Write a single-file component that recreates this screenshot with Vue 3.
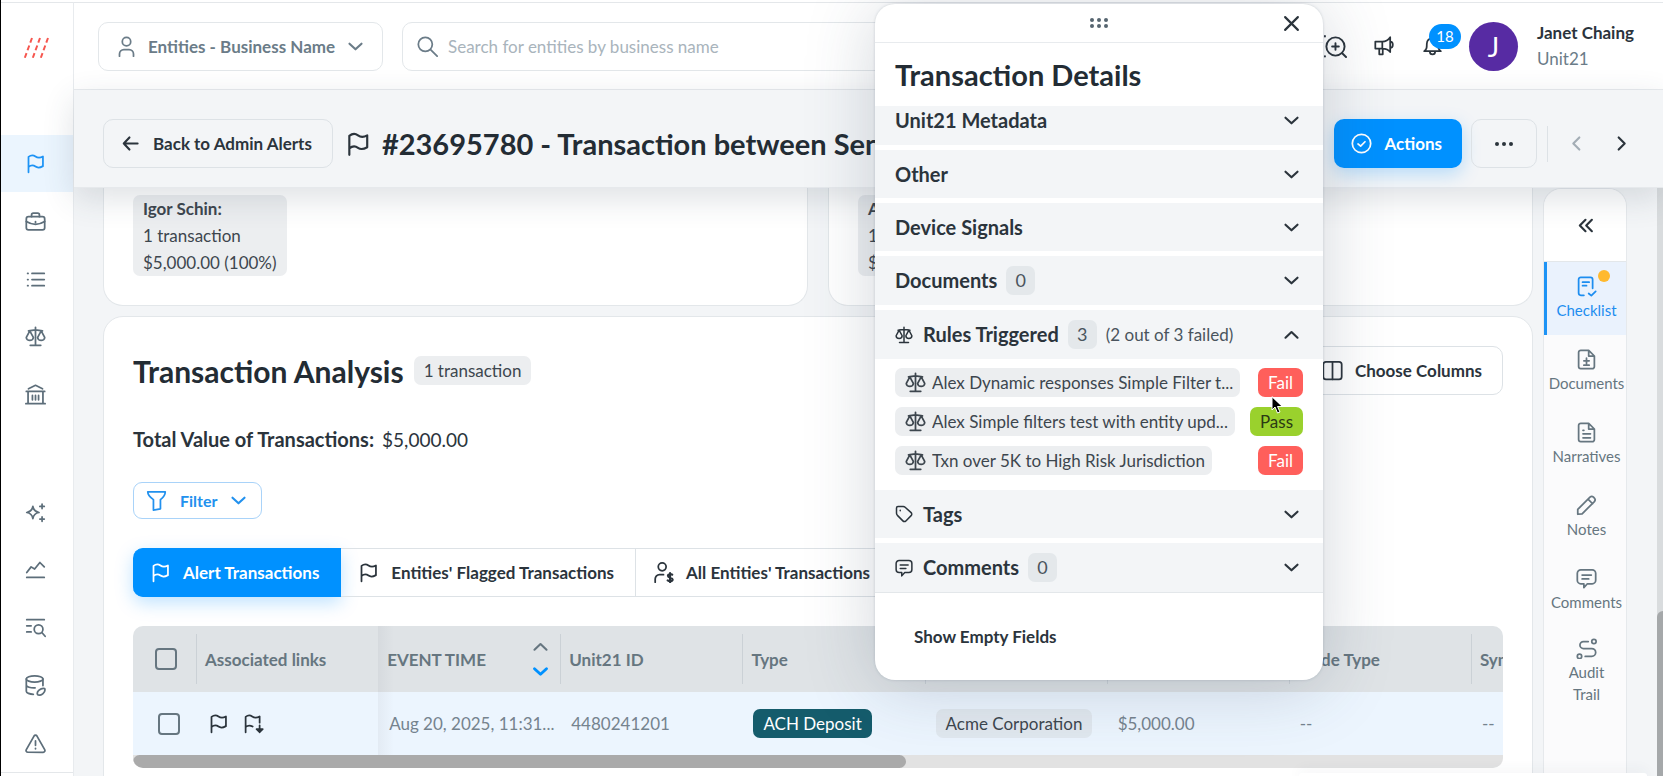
<template>
    <div class="app-shell">
        <svg class="sprite" aria-hidden="true">
            <symbol id="i-flag" viewBox="0 0 24 24"><path d="M4 22V4.500C7 2 10 2.500 12 4s5 2 8.500 0v11C17 17 14 17 12 15.500S7 13.500 4 16" /></symbol>
            <symbol id="i-flag-down" viewBox="0 0 24 24"><path d="M3 22V4.500C6 2 8.500 2.500 10.500 4s5 2 8.500 0v7M3 16c3-2.500 5.500-2 8-.5M19 14v8M15.500 18.500L19 22l3.500-3.500z" /></symbol>
            <symbol id="i-case" viewBox="0 0 24 24"><rect x="1.500" y="6.500" width="21" height="15" rx="2.500" /><path d="M7.500 6.500v-2A2 2 0 0 1 9.500 2.500h5a2 2 0 0 1 2 2v2M1.500 12c6.500 4 14.500 4 21 0M12 12v1" /></symbol>
            <symbol id="i-list" viewBox="0 0 24 24"><path d="M8 5h14M8 12h14M8 19h14M3 5h.5M3 12h.5M3 19h.5" /></symbol>
            <symbol id="i-scale" viewBox="0 0 24 24"><path d="M12 1.500V22M6 22h12M4 5.500c3 0 5-1 8-1s5 1 8 1M5.500 5.500L1.500 13a4 3.500 0 0 0 8 0zM18.500 5.500l-4 7.500a4 3.500 0 0 0 8 0z" /></symbol>
            <symbol id="i-bank" viewBox="0 0 24 24"><path d="M4 5.500L12 1.500l8 4M1.500 8.500h21M3.500 8.500V22M20.500 8.500V22M1 22.500h22M8.500 13v5M12 13v5M15.500 13v5" /></symbol>
            <symbol id="i-spark" viewBox="0 0 24 24"><path d="M9 5c.7 4.500 2.500 6.300 7 7-4.500.7-6.300 2.500-7 7-.7-4.500-2.500-6.300-7-7 4.500-.7 6.300-2.500 7-7zM19.500 2.500v5M17 5h5M19.500 17v5M17 19.500h5" /></symbol>
            <symbol id="i-chart" viewBox="0 0 24 24"><path d="M2 15.500L7 9l4 2.500L17 4l5 5M2 21h20" /></symbol>
            <symbol id="i-list-search" viewBox="0 0 24 24"><path d="M2 3h20M2 10h5M2 17h5M19.500 18L23 22" /><circle cx="15.500" cy="14" r="5" /></symbol>
            <symbol id="i-database" viewBox="0 0 24 24"><ellipse cx="11" cy="4.500" rx="9.500" ry="3.500" /><path d="M1.500 4.500v14c0 2 4 3.500 8 3.500M20.500 4.500V12M1.500 11.500c0 2 5 3.500 10 3.200M14.500 22.500c-2-3.500 3.500-8 8-7 1.500 4-4 9-8 7z" /></symbol>
            <symbol id="i-alert" viewBox="0 0 24 24"><path d="M10.300 3.500L1.500 19a2 2 0 0 0 1.700 3h17.600a2 2 0 0 0 1.700-3L13.700 3.500a2 2 0 0 0-3.400 0zM12 9v5M12 17.500v.5" /></symbol>
            <symbol id="i-user" viewBox="0 0 24 24"><circle cx="12" cy="6.500" r="4.800" /><path d="M4 23v-2.500a5 5 0 0 1 5-5h6a5 5 0 0 1 5 5V23" /></symbol>
            <symbol id="i-user-dollar" viewBox="0 0 24 24"><circle cx="10.500" cy="5.500" r="4.500" /><path d="M2.500 23v-3.500a5 5 0 0 1 5-5H12" /><path stroke-width="2.400" d="M22 14.500c-1.500-1-5-1-5 1.300 0 2.700 5.500 1.500 5.500 4.200 0 2.300-4 2.300-5.700 1M19.500 12.500v11" /></symbol>
            <symbol id="i-down" viewBox="0 0 24 24"><path d="M3.500 8l8.500 8 8.500-8" /></symbol>
            <symbol id="i-up" viewBox="0 0 24 24"><path d="M3.500 16.500L12 8.500l8.500 8" /></symbol>
            <symbol id="i-left" viewBox="0 0 24 24"><path d="M16 3.500L7.500 12l8.500 8.500" /></symbol>
            <symbol id="i-right" viewBox="0 0 24 24"><path d="M8 3.500l8.500 8.500L8 20.500" /></symbol>
            <symbol id="i-back" viewBox="0 0 24 24"><path d="M22 12H2.500M10.500 3.500L2.500 12l8 8.500" /></symbol>
            <symbol id="i-double-left" viewBox="0 0 24 24"><path d="M12 4l-8 8 8 8M21 4l-8 8 8 8" /></symbol>
            <symbol id="i-search" viewBox="0 0 24 24"><circle cx="9.500" cy="9.500" r="8" /><path d="M15.500 15.500L23 23" /></symbol>
            <symbol id="i-search-plus" viewBox="0 0 24 24"><circle cx="12.500" cy="12" r="9.500" /><path d="M19.500 19l4 4M12.500 8.500v7M9 12h7M1.500 1v.5M1.500 22v.5" /></symbol>
            <symbol id="i-horn" viewBox="0 0 24 24"><path d="M1.500 7.500h8v8h-8zM9.500 7.500c4 0 7-2 9-5v17c-2-3-5-4-9-4M6 15.500V22h4v-6.500M18.500 7.500c4 0 4 7 0 7" /></symbol>
            <symbol id="i-bell" viewBox="0 0 24 24"><path d="M2.500 18.500h19c-3-2-3-4-3-8.500a6.500 6.500 0 0 0-13 0c0 4.500 0 6.500-3 8.500zM9 19c0 4 6 4 6 0M12 3.500V2" /></symbol>
            <symbol id="i-check" viewBox="0 0 24 24"><circle cx="12" cy="12" r="10.500" /><path d="M8 12.500l3 2.500 5-5" /></symbol>
            <symbol id="i-filter" viewBox="0 0 24 24"><path d="M2 2h20c0 4-1.500 6-5.500 9v10.500L8.500 23V11C4 8 2 6 2 2z" /></symbol>
            <symbol id="i-columns" viewBox="0 0 24 24"><rect x="1.500" y="2" width="21" height="20" rx="3" /><path d="M12 2v20" /></symbol>
            <symbol id="i-tag" viewBox="0 0 24 24"><path d="M2 4v7c0 1 .5 2 1.200 2.800l7.300 7.400a2.800 2.800 0 0 0 4 0l7-7a2.800 2.800 0 0 0 0-4L13.500 3A4 4 0 0 0 11 2H4a2 2 0 0 0-2 2zM7 7v.5" /></symbol>
            <symbol id="i-comment" viewBox="0 0 24 24"><path d="M5.500 2h13A4 4 0 0 1 22.500 6v8a4 4 0 0 1-4 4H13l-4 4.500V18H5.500a4 4 0 0 1-4-4V6a4 4 0 0 1 4-4zM7 8h10.500M7 12.500h7.500" /></symbol>
            <symbol id="i-close" viewBox="0 0 24 24"><path d="M3 3l18 18M21 3L3 21" /></symbol>
            <symbol id="i-checklist" viewBox="0 0 24 24"><path d="M9 22H5.500A2.500 2.500 0 0 1 3 19.500V4A2.500 2.500 0 0 1 5.500 1.500h11A2.500 2.500 0 0 1 19 4v10M7.500 7H15M7.500 11H12M14.500 20l3 2.500 5-5" /></symbol>
            <symbol id="i-file-plus" viewBox="0 0 24 24"><path d="M14.500 1.500H5.500A2.500 2.500 0 0 0 3 4v16a2.500 2.500 0 0 0 2.500 2.500h13A2.500 2.500 0 0 0 21 20V8zM14.500 1.500V8H21M12 10.500v6M9 13.500h6M9 18.500h6" /></symbol>
            <symbol id="i-file-text" viewBox="0 0 24 24"><path d="M14.500 1.500H5.500A2.500 2.500 0 0 0 3 4v16a2.500 2.500 0 0 0 2.500 2.500h13A2.500 2.500 0 0 0 21 20V8zM14.500 1.500V8H21M8 9.500h1M8 13.500h8.500M8 18h8.500" /></symbol>
            <symbol id="i-pencil" viewBox="0 0 24 24"><path d="M2 22v-5.500L16 2.500a3 3 0 0 1 4 0l1 1a3 3 0 0 1 0 4L7 21.500zM14 5l5 5" /></symbol>
            <symbol id="i-route" viewBox="0 0 24 24"><circle cx="20.500" cy="4" r="2.500" /><circle cx="4" cy="21" r="2.500" /><path d="M14 4H8.500a4 4 0 0 0 0 8H18a4.500 4.500 0 0 1 0 9h-7.500" /></symbol>
        </svg>

        <nav class="side-nav" aria-label="Main">
            <a class="logo" href="#" aria-label="Home">
                <svg viewBox="0 0 26 24"><path d="M9 1L1 23M17 1L9 23M25 1l-8 22" /></svg>
            </a>
            <a v-for="item in navTop" :key="item" href="#" class="nav-item" :class="{ active: item === 'flag' }" :aria-label="item">
                <svg><use :href="'#i-' + item" /></svg>
            </a>
            <span class="nav-gap"></span>
            <a v-for="item in navBottom" :key="item" href="#" class="nav-item" :aria-label="item">
                <svg><use :href="'#i-' + item" /></svg>
            </a>
            <span class="nav-foot"></span>
        </nav>

        <div class="page">
            <header class="top-bar">
                <label class="entity-select">
                    <svg><use href="#i-user" /></svg>
                    <select aria-label="Search type">
                        <option>Entities - Business Name</option>
                    </select>
                    <svg class="small"><use href="#i-down" /></svg>
                </label>
                <label class="search-box">
                    <svg><use href="#i-search" /></svg>
                    <input type="text" aria-label="Search" placeholder="Search for entities by business name">
                </label>
                <div class="top-tools">
                    <button type="button" class="tool" aria-label="Advanced search"><svg class="wide"><use href="#i-search-plus" /></svg></button>
                    <button type="button" class="tool" aria-label="Announcements"><svg><use href="#i-horn" /></svg></button>
                    <button type="button" class="tool" aria-label="Notifications">
                        <svg><use href="#i-bell" /></svg>
                        <span class="counter">18</span>
                    </button>
                </div>
                <span class="avatar">J</span>
                <div class="account">
                    <strong>Janet Chaing</strong>
                    <span>Unit21</span>
                </div>
            </header>

            <div class="alert-bar">
                <button type="button" class="btn back"><svg class="small"><use href="#i-back" /></svg>Back to Admin Alerts</button>
                <svg class="title-flag"><use href="#i-flag" /></svg>
                <h1>#23695780 - Transaction between Sender and Receiver</h1>
                <button type="button" class="btn primary"><svg><use href="#i-check" /></svg>Actions</button>
                <button type="button" class="btn more" aria-label="More"><i></i><i></i><i></i></button>
                <span class="divider"></span>
                <button type="button" class="pager muted" aria-label="Previous"><svg><use href="#i-left" /></svg></button>
                <button type="button" class="pager" aria-label="Next"><svg><use href="#i-right" /></svg></button>
            </div>

            <div class="body">
                <main class="content">
                    <div class="party-cards">
                        <section v-for="party in parties" :key="party" class="card party">
                            <div class="party-box">
                                <strong>{{ party }}:</strong>
                                <span>1 transaction</span>
                                <span>$5,000.00 (100%)</span>
                            </div>
                        </section>
                    </div>

                    <section class="card analysis">
                        <div class="analysis-head">
                            <h2>Transaction Analysis</h2>
                            <span class="chip">1 transaction</span>
                            <button type="button" class="btn columns"><svg><use href="#i-columns" /></svg>Choose Columns</button>
                        </div>
                        <p class="total"><strong>Total Value of Transactions:</strong><span>$5,000.00</span></p>
                        <button type="button" class="filter"><svg><use href="#i-filter" /></svg>Filter<svg class="small"><use href="#i-down" /></svg></button>
                        <div class="tabs">
                            <button v-for="tab in tabs" :key="tab.label" type="button" :class="{ active: activeTab === tab.label }" @click="activeTab = tab.label">
                                <svg><use :href="'#i-' + tab.icon" /></svg>{{ tab.label }}
                            </button>
                        </div>
                        <div class="table-wrap">
                            <table>
                                <thead>
                                    <tr>
                                        <th class="col-check"><input type="checkbox" aria-label="Select all"></th>
                                        <th>Associated links</th>
                                        <th class="pinned-edge">
                                            <span class="sortable">EVENT TIME
                                                <span class="sort"><svg><use href="#i-up" /></svg><svg class="on"><use href="#i-down" /></svg></span>
                                            </span>
                                        </th>
                                        <th v-for="name in columns" :key="name">{{ name }}</th>
                                    </tr>
                                </thead>
                                <tbody>
                                    <tr>
                                        <td class="col-check"><input type="checkbox" aria-label="Select transaction"></td>
                                        <td><span class="links"><svg><use href="#i-flag" /></svg><svg><use href="#i-flag-down" /></svg></span></td>
                                        <td class="pinned-edge">Aug 20, 2025, 11:31...</td>
                                        <td>4480241201</td>
                                        <td><span class="chip teal">ACH Deposit</span></td>
                                        <td><span class="chip entity">Acme Corporation</span></td>
                                        <td>$5,000.00</td>
                                        <td>--</td>
                                        <td>--</td>
                                    </tr>
                                </tbody>
                            </table>
                            <div class="h-scroll"><span></span></div>
                        </div>
                    </section>
                </main>

                <aside class="rail">
                    <button type="button" class="rail-toggle" aria-label="Expand"><svg><use href="#i-double-left" /></svg></button>
                    <a v-for="item in railItems" :key="item.label" href="#" class="rail-item" :class="{ active: item.dot }">
                        <svg><use :href="'#i-' + item.icon" /></svg>
                        <span>{{ item.label }}</span>
                        <i v-if="item.dot" class="dot"></i>
                    </a>
                </aside>
                <div class="v-scroll"><span></span></div>
            </div>
        </div>

        <section class="details" aria-label="Transaction Details">
            <div class="grip">
                <svg class="dots" viewBox="0 0 20 12"><circle v-for="n in 6" :key="n" :cx="3 + (n - 1) % 3 * 7" :cy="n > 3 ? 9 : 3" r="2" /></svg>
                <button type="button" class="close" aria-label="Close"><svg><use href="#i-close" /></svg></button>
            </div>
            <h2>Transaction Details</h2>
            <div class="sections">
                <template v-for="group in groups" :key="group.label">
                    <button type="button" class="group" :class="{ counted: group.count !== undefined, clipped: group.clipped }" @click="toggle(group.label)">
                        <svg v-if="group.icon" class="group-icon"><use :href="'#i-' + group.icon" /></svg>
                        <strong>{{ group.label }}</strong>
                        <span v-if="group.count !== undefined" class="count">{{ group.count }}</span>
                        <span v-if="group.note" class="note">{{ group.note }}</span>
                        <svg class="arrow"><use :href="opened === group.label ? '#i-up' : '#i-down'" /></svg>
                    </button>
                    <ul v-if="group.rules && opened === group.label" class="rules">
                        <li v-for="rule in group.rules" :key="rule.name">
                            <a href="#" class="chip rule"><svg><use href="#i-scale" /></svg><span>{{ rule.name }}</span></a>
                            <span class="chip" :class="rule.result.toLowerCase()">{{ rule.result }}</span>
                        </li>
                    </ul>
                </template>
            </div>
            <div class="details-foot">
                <button type="button">Show Empty Fields</button>
            </div>
            <svg class="pointer" viewBox="0 0 12 18"><path d="M1 1v13l3-3 2.500 6 2.500-1-2.500-5.500H11z" /></svg>
        </section>
        <div class="bottom-sheet"></div>
    </div>
</template>

<script setup>
    import { ref } from "vue";

    const navTop = ["flag", "case", "list", "scale", "bank"];
    const navBottom = ["spark", "chart", "list-search", "database", "alert"];
    const parties = ["Igor Schin", "Acme Corporation"];
    const columns = ["Unit21 ID", "Type", "Entity", "Amount", "Trade Type", "Symbol"];
    const tabs = [
        { label: "Alert Transactions", icon: "flag" },
        { label: "Entities' Flagged Transactions", icon: "flag" },
        { label: "All Entities' Transactions", icon: "user-dollar" }
    ];
    const railItems = [
        { label: "Checklist", icon: "checklist", dot: true },
        { label: "Documents", icon: "file-plus" },
        { label: "Narratives", icon: "file-text" },
        { label: "Notes", icon: "pencil" },
        { label: "Comments", icon: "comment" },
        { label: "Audit Trail", icon: "route" }
    ];
    const groups = [
        { label: "Unit21 Metadata", clipped: true },
        { label: "Other" },
        { label: "Device Signals" },
        { label: "Documents", count: 0 },
        {
            label: "Rules Triggered",
            icon: "scale",
            count: 3,
            note: "(2 out of 3 failed)",
            rules: [
                { name: "Alex Dynamic responses Simple Filter t...", result: "Fail" },
                { name: "Alex Simple filters test with entity upd...", result: "Pass" },
                { name: "Txn over 5K to High Risk Jurisdiction", result: "Fail" }
            ]
        },
        { label: "Tags", icon: "tag" },
        { label: "Comments", icon: "comment", count: 0 }
    ];

    const activeTab = ref("Alert Transactions");
    const opened = ref("Rules Triggered");

    const toggle = function(label) {
        opened.value = opened.value === label ? "" : label;
    };
</script>

<style>
    body {
        background: #fff;
    }
</style>

<style scoped>
    * {
        box-sizing: border-box;
    }

    .app-shell {
        position: relative;
        display: flex;
        height: 100vh;
        padding-top: 2px;
        overflow: hidden;
        border-left: 1px solid #000;
        color: #2b343c;
        font: 19px/27px Lato, "Open Sans", sans-serif;
    }

    .sprite {
        position: absolute;
        width: 0;
        height: 0;
    }

    svg {
        flex: none;
        width: 21px;
        height: 21px;
        fill: none;
        stroke: currentColor;
        stroke-width: 2;
        stroke-linecap: round;
        stroke-linejoin: round;
    }

    svg.small {
        width: 17px;
        height: 17px;
        stroke-width: 3;
    }

    h1, h2, p, ul {
        margin: 0;
        padding: 0;
    }

    h1, h2 {
        overflow: hidden;
        font-size: 29px;
        font-weight: 700;
        line-height: 36px;
        white-space: nowrap;
        color: #232c34;
    }

    a {
        color: inherit;
        text-decoration: none;
    }

    button, input, select {
        margin: 0;
        padding: 0;
        border: 0;
        background: none;
        color: inherit;
        font: inherit;
        outline: 0;
    }

    /* 左侧导航 */
    .side-nav {
        display: flex;
        flex: none;
        flex-direction: column;
        width: 73px;
        border-top: 1px solid #e4e7ea;
        border-right: 1px solid #e8ebee;
        background: #fff;
        color: #5d6e7a;
    }

    .logo {
        display: flex;
        justify-content: center;
        height: 132px;
        padding-top: 34px;
        padding-right: 3px;
    }

    .logo svg {
        width: 26px;
        height: 24px;
        stroke: #f6564f;
        stroke-width: 2;
        stroke-dasharray: 5 3;
        stroke-linecap: butt;
    }

    .nav-item {
        display: flex;
        align-items: center;
        justify-content: center;
        height: 58px;
        padding-right: 3px;
    }

    .nav-item.active {
        background: #ebf5fe;
        color: #1d93f5;
    }

    .nav-gap {
        height: 60px;
    }

    .nav-foot {
        flex: 1;
        border-bottom: 1px solid #e4e7ea;
        margin-bottom: 3px;
    }

    .page {
        display: flex;
        flex: 1;
        flex-direction: column;
        min-width: 0;
        border-top: 1px solid #e4e7ea;
        background: #f3f5f7;
    }

    /* 顶部栏 */
    .top-bar {
        display: flex;
        flex: none;
        align-items: center;
        height: 87px;
        padding: 0 29px 0 24px;
        border-bottom: 1px solid #e8ebee;
        background: #fff;
    }

    .entity-select, .search-box {
        display: flex;
        align-items: center;
        height: 49px;
        border: 1px solid #e3e7ea;
        border-radius: 10px;
        color: #6b7c88;
    }

    .entity-select {
        gap: 11px;
        padding: 0 18px 0 17px;
    }

    .entity-select select {
        appearance: none;
        font-weight: 700;
        font-size: 17px;
    }

    .search-box {
        flex: 1;
        gap: 10px;
        margin-left: 19px;
        padding-left: 14px;
    }

    .search-box input {
        flex: 1;
        font-size: 17px;
    }

    .search-box input::placeholder {
        color: #a9b4bc;
        opacity: 1;
    }

    .top-tools {
        display: flex;
        gap: 27px;
        margin-left: 24px;
    }

    .tool {
        position: relative;
        display: flex;
    }

    .tool svg.wide {
        width: 24px;
        height: 23px;
    }

    .counter {
        position: absolute;
        left: 7px;
        bottom: 9px;
        width: 32px;
        border-radius: 13px;
        background: #0091ff;
        color: #fff;
        font-size: 15px;
        line-height: 25px;
    }

    .avatar {
        width: 49px;
        margin-left: 26px;
        border-radius: 50%;
        background: #572ba3;
        color: #fff;
        font-size: 27px;
        line-height: 49px;
        text-align: center;
    }

    .account {
        display: flex;
        flex-direction: column;
        margin-left: 19px;
        font-size: 17px;
        line-height: 26px;
    }

    .account span {
        color: #6b7c88;
    }

    .alert-bar {
        position: relative;
        z-index: 1;
        display: flex;
        flex: none;
        align-items: center;
        height: 98px;
        padding: 10px 33px 0 29px;
        border-bottom: 1px solid #e6e9ec;
        background: #f3f5f7;
        box-shadow: 0 10px 32px rgba(50, 70, 90, 0.16);
    }

    .alert-bar h1 {
        flex: 1;
        margin-left: 11px;
    }

    .btn {
        display: flex;
        flex: none;
        align-items: center;
        justify-content: center;
        height: 49px;
        border: 1px solid #dde2e6;
        border-radius: 10px;
        font-size: 17px;
        font-weight: 700;
    }

    .btn.back {
        gap: 14px;
        padding: 0 20px 0 18px;
    }

    .title-flag {
        width: 26px;
        height: 26px;
        margin-left: 12px;
    }

    .btn.primary {
        gap: 12px;
        padding: 0 20px 0 17px;
        border: 0;
        background: #0091ff;
        color: #fff;
        box-shadow: 0 6px 18px rgba(0, 145, 255, 0.25);
    }

    .btn.more {
        gap: 3px;
        width: 66px;
        margin-left: 9px;
    }

    .btn.more i {
        width: 4px;
        height: 4px;
        border-radius: 50%;
        background: #2b343c;
    }

    .divider {
        width: 1px;
        height: 36px;
        margin: 0 20px 0 10px;
        background: #dde2e6;
    }

    .pager {
        display: flex;
        margin-left: 28px;
    }

    .pager.muted {
        margin-left: 0;
        color: #a3adb5;
    }

    .pager svg {
        width: 17px;
        height: 17px;
        stroke-width: 3;
    }

    /* 主体内容 */
    .body {
        display: flex;
        flex: 1;
        min-height: 0;
        overflow: hidden;
    }

    .content {
        flex: 1;
        min-width: 0;
        padding-left: 29px;
    }

    .card {
        border: 1px solid #e3e7ea;
        background: #fff;
    }

    .party-cards {
        display: flex;
        gap: 20px;
        margin-bottom: 10px;
    }

    .party {
        flex: 1;
        padding: 7px 29px 29px;
        border-top: 0;
        border-radius: 0 0 20px 20px;
    }

    .party-box {
        display: inline-flex;
        flex-direction: column;
        padding: 0 10px;
        border-radius: 7px;
        background: #eceef0;
        color: #3d464e;
        font-size: 17px;
        vertical-align: top;
    }

    .analysis {
        padding: 29px 29px 40px;
        border-radius: 20px;
    }

    .analysis-head {
        display: flex;
        align-items: center;
        height: 49px;
    }

    .analysis-head h2 {
        font-size: 30px;
    }

    .analysis-head .chip {
        margin-left: 10px;
    }

    .chip {
        display: inline-block;
        padding: 0 10px;
        border-radius: 7px;
        background: #eceef0;
        color: #3d464e;
        font-size: 17px;
        line-height: 29px;
        white-space: nowrap;
    }

    .chip.entity {
        background: #e1e8ef;
    }

    .chip.teal {
        background: #155c6c;
        color: #fff;
    }

    .chip.fail {
        background: #ff5f5b;
        color: #fff;
    }

    .chip.pass {
        background: #9ad12d;
        color: #2b3a14;
    }

    .btn.columns {
        gap: 12px;
        margin-left: auto;
        padding: 0 20px;
    }

    .total {
        display: flex;
        gap: 8px;
        margin-top: 31px;
    }

    .total strong {
        font-size: 20px;
    }

    .filter {
        display: flex;
        align-items: center;
        gap: 13px;
        height: 37px;
        margin-top: 29px;
        padding: 0 14px 0 12px;
        border: 1px solid #a9d3f9;
        border-radius: 9px;
        color: #2291ee;
        font-size: 16px;
        font-weight: 700;
    }

    .tabs {
        display: flex;
        margin-top: 29px;
    }

    .tabs button {
        display: flex;
        flex: none;
        align-items: center;
        gap: 12px;
        height: 49px;
        padding: 0 21px 0 17px;
        border: 1px solid #dde2e6;
        border-left: 0;
        font-size: 17px;
        font-weight: 700;
    }

    .tabs button:first-child {
        border-radius: 10px 0 0 10px;
    }

    .tabs button.active {
        border-color: #0091ff;
        background: #0091ff;
        color: #fff;
        box-shadow: 0 6px 18px rgba(0, 145, 255, 0.25);
    }

    .table-wrap {
        margin-top: 29px;
        overflow: hidden;
        border-radius: 10px;
    }

    table {
        width: 1520px;
        border-collapse: collapse;
        table-layout: fixed;
        color: #75838e;
        font-size: 17px;
    }

    th, td {
        padding: 0 0 0 11px;
        text-align: left;
        white-space: nowrap;
    }

    th {
        height: 66px;
        padding-left: 9px;
        background: linear-gradient(#cbd1d6, #cbd1d6) no-repeat left center / 1px 50px #dfe3e6;
        color: #667680;
        font-weight: 700;
    }

    td {
        height: 63px;
        background: #ecf5fe;
    }

    .col-check {
        width: 63px;
        padding-left: 25px;
    }

    th.col-check {
        padding-left: 22px;
        background: #dfe3e6;
    }

    td.pinned-edge {
        background-image: linear-gradient(90deg, #e3ebf4, #ecf5fe 16px);
    }

    th.pinned-edge {
        background: linear-gradient(90deg, #d6dade, #dfe3e6 16px);
    }

    input[type="checkbox"] {
        display: block;
        width: 22px;
        height: 22px;
        border: 2px solid #667680;
        border-radius: 4px;
        appearance: none;
    }

    input[type="checkbox"]:checked {
        background: #0091ff;
    }

    .sortable {
        display: flex;
        align-items: center;
        justify-content: space-between;
        padding-right: 11px;
    }

    .sort {
        display: flex;
        flex-direction: column;
        gap: 8px;
    }

    .sort svg {
        width: 17px;
        height: 17px;
        stroke-width: 3;
    }

    .sort .on {
        color: #0091ff;
        stroke-width: 4;
    }

    .links {
        display: flex;
        gap: 14px;
        padding-left: 1px;
        color: #2b343c;
    }

    .h-scroll {
        height: 13px;
        background: #e2e2e2;
    }

    .h-scroll span {
        display: block;
        width: 56.4%;
        height: 13px;
        border-radius: 7px;
        background: #aaa;
    }

    /* 右侧工具栏 */
    .rail {
        display: flex;
        flex: none;
        flex-direction: column;
        width: 84px;
        margin-left: 10px;
        border: 1px solid #e6e9ec;
        border-radius: 18px 18px 0 0;
        background: #fbfbfc;
    }

    .rail-toggle {
        display: flex;
        align-items: center;
        justify-content: center;
        height: 73px;
        border-bottom: 1px solid #e3e7ea;
        border-radius: 18px 18px 0 0;
        background: #fff;
    }

    .rail-toggle svg {
        width: 17px;
        height: 17px;
        stroke-width: 3;
    }

    .rail-item {
        position: relative;
        display: flex;
        flex-direction: column;
        align-items: center;
        justify-content: center;
        gap: 2px;
        min-height: 73px;
        padding: 11px 0;
        border-left: 3px solid transparent;
        color: #667680;
        font-size: 15px;
        line-height: 22px;
        text-align: center;
    }

    .rail-item span {
        width: min-content;
    }

    .rail-item.active {
        border-left-color: #1d93f5;
        background: #eaf2fd;
        color: #1d8df0;
    }

    .dot {
        position: absolute;
        top: 8px;
        right: 16px;
        width: 12px;
        height: 12px;
        border-radius: 50%;
        background: #ffb92e;
    }

    .v-scroll {
        display: flex;
        flex: none;
        flex-direction: column;
        justify-content: flex-end;
        width: 6px;
        margin-left: 30px;
        background: #d9dcde;
    }

    .v-scroll span {
        height: 28%;
        border-radius: 6px 0 0 0;
        background: #a5a8aa;
    }

    /* 浮动的交易详情窗口 */
    .details {
        position: absolute;
        z-index: 3;
        top: 4px;
        right: 340px;
        display: flex;
        flex-direction: column;
        width: 448px;
        border-radius: 20px;
        background: #fff;
        box-shadow: 0 6px 70px rgba(50, 70, 90, 0.22), 0 0 3px rgba(50, 70, 90, 0.2);
    }

    .grip {
        position: relative;
        display: flex;
        align-items: center;
        justify-content: center;
        height: 39px;
        border-bottom: 1px solid #e8ebee;
    }

    .grip .dots {
        width: 20px;
        height: 12px;
        fill: #566570;
        stroke: none;
    }

    .close {
        position: absolute;
        right: 23px;
        display: flex;
    }

    .close svg, .arrow {
        width: 17px;
        height: 17px;
        stroke-width: 3;
    }

    .details h2 {
        padding: 14px 20px 13px;
    }

    .sections {
        display: flex;
        flex-direction: column;
        border-bottom: 1px solid #e3e7ea;
    }

    .group {
        display: flex;
        align-items: center;
        height: 48px;
        margin-top: 5px;
        padding: 0 23px 0 20px;
        background: #f3f5f7;
        font-size: 20px;
    }

    .group.counted {
        height: 49px;
    }

    .group.clipped {
        height: 39px;
        margin-top: 0;
        padding-bottom: 10px;
    }

    .group-icon {
        width: 18px;
        height: 18px;
        margin-right: 10px;
    }

    .count {
        width: 29px;
        margin-left: 9px;
        border-radius: 7px;
        background: #e4e8eb;
        color: #4a545d;
        font-size: 18px;
        line-height: 29px;
    }

    .note {
        margin-left: 9px;
        color: #4a545d;
        font-size: 17px;
    }

    .arrow {
        margin-left: auto;
    }

    .rules {
        display: flex;
        flex-direction: column;
        gap: 10px;
        padding: 9px 20px 15px;
        list-style: none;
    }

    .rules + .group {
        margin-top: 0;
    }

    .rules li {
        display: flex;
        align-items: center;
        justify-content: space-between;
        gap: 12px;
    }

    .rules li > .chip {
        flex: none;
    }

    .rules li > .rule {
        display: flex;
        flex: 0 1 auto;
        align-items: center;
        gap: 6px;
        min-width: 0;
        padding-right: 7px;
    }

    .rule span {
        overflow: hidden;
        text-overflow: ellipsis;
    }

    .details-foot {
        padding: 30px 39px;
        font-size: 17px;
        font-weight: 700;
    }

    .pointer {
        position: absolute;
        top: 392px;
        right: 40px;
        width: 12px;
        height: 18px;
        fill: #000;
        stroke: #fff;
        stroke-width: 1;
    }

    .bottom-sheet {
        position: absolute;
        z-index: 2;
        right: 16px;
        bottom: 0;
        width: 348px;
        height: 3px;
        border-radius: 8px 8px 0 0;
        background: #fff;
        box-shadow: 0 0 14px rgba(50, 70, 90, 0.16);
    }
</style>
